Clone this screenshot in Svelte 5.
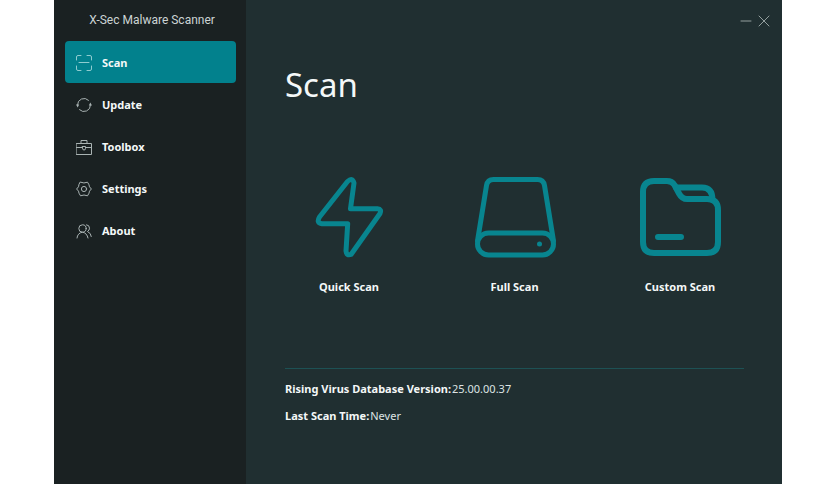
<script>
  let active = 'Scan';

  const pages = ['Scan', 'Update', 'Toolbox', 'Settings', 'About'];
  const scans = ['Quick Scan', 'Full Scan', 'Custom Scan'];

  const info = [
    { label: 'Rising Virus Database Version:', value: '25.00.00.37' },
    { label: 'Last Scan Time:', value: 'Never' }
  ];
</script>

<div class="window">
  <aside>
    <div class="brand">X-Sec Malware Scanner</div>
    <nav aria-label="Main">
      {#each pages as page}
        <button class="nav-item" class:active={active === page} on:click={() => (active = page)}>
          <svg viewBox="0 0 16 16" aria-hidden="true">
            {#if page === 'Scan'}
              <path d="M.5 5V2Q.5 .5 2 .5H5M11 .5h3Q15.500 .5 15.500 2V5M15.500 11v3Q15.500 15.500 14 15.500H11M5 15.500H2Q.5 15.500 .5 14V11M3 7.500h10" />
            {:else if page === 'Update'}
              <path d="M1.500 8A6.500 6.500 0 0 1 12.500 3.300M14.500 8A6.500 6.500 0 0 1 3.500 12.700" />
              <path class="solid" d="M0 7.500h3.200L1.700 10.500zM12.800 8.500H16L14.300 5.500z" />
            {:else if page === 'Toolbox'}
              <path d="M.5 4.500h15v11H.5zM5 4.500V1.500h6v3M.5 8.500h6M9.500 8.500h6M6.500 7.500h3v2a1.500 1.500 0 0 1-3 0z" />
            {:else if page === 'Settings'}
              <path d="M4.500 1.200Q8 2.800 11.500 1.200L13 3.800Q12.800 5.800 15.400 8Q12.800 10.200 13 12.200L11.500 14.800Q8 13.200 4.500 14.800L3 12.200Q3.200 10.200 .6 8Q3.200 5.800 3 3.800z" />
              <circle cx="8" cy="8" r="2.600" />
            {:else}
              <circle cx="6.500" cy="5.500" r="3.700" />
              <path d="M1 15q.5-5 5.500-5.800Q11 10 12 15M10.500 1.800q3 .2 3 3.400 0 2-2 3.300Q15 10 15.300 13.500" />
            {/if}
          </svg>
          <span>{page}</span>
        </button>
      {/each}
    </nav>
  </aside>

  <main>
    <div class="window-controls">
      <button aria-label="Minimize">
        <svg viewBox="0 0 12 12"><path d="M1 6h10" /></svg>
      </button>
      <button aria-label="Close">
        <svg viewBox="0 0 12 12"><path d="M1 1l10 10M11 1L1 11" /></svg>
      </button>
    </div>

    <h1>Scan</h1>

    <div class="scans">
      {#each scans as scan}
        <button class="scan">
          <svg viewBox="0 0 84 84" aria-hidden="true">
            {#if scan === 'Quick Scan'}
              <path d="M40.500 6.500L12.500 42Q9 48 15 48.700H40.700L39 76Q39.500 81 44 79.500L73 38.500Q75 34 70.500 33.700H43.500L47 8Q45.500 2 40.500 6.500z" />
            {:else if scan === 'Full Scan'}
              <path d="M4.500 66L13.500 10.500Q14.500 4.500 20.500 4.500H64.500Q70.500 4.500 71.500 10.500L80.500 66" />
              <rect x="4.500" y="58" width="76" height="22" rx="11" />
              <circle class="dot" cx="66.500" cy="69" r="2.500" />
            {:else}
              <path class="thick" d="M5 17Q5 6 16 6H29Q34 6 36.500 10L41 18.500Q44 24 49 24H69Q80 24 80 35V67Q80 78 69 78H16Q5 78 5 67z" />
              <path class="thick" d="M38 12.500H64Q74.500 12.500 74.500 25M20 62H43" />
            {/if}
          </svg>
          <span>{scan}</span>
        </button>
      {/each}
    </div>

    <dl>
      {#each info as row}
        <div class="row">
          <dt>{row.label}</dt>
          <dd>{row.value}</dd>
        </div>
      {/each}
    </dl>
  </main>
</div>

<style>
  :global(body) {
    margin: 0;
    background: #fff;
  }

  .window {
    display: flex;
    min-height: 100vh;
    margin: 0 54px;
    background: #202f31;
    color: #f4f8f8;
    font-family: 'Segoe UI', 'Noto Sans', sans-serif;
    font-size: 11px;
  }

  button {
    padding: 0;
    border: 0;
    background: none;
    color: inherit;
    font: inherit;
    cursor: pointer;
  }

  svg {
    display: block;
    fill: none;
    stroke: currentColor;
    stroke-linecap: round;
    stroke-linejoin: round;
  }

  /* Sidebar */
  aside {
    flex: none;
    width: 192px;
    background: #1a2122;
  }

  .brand {
    padding-top: 12px;
    padding-left: 4px;
    height: 29px;
    color: #ccd4d4;
    font-family: Roboto, sans-serif;
    font-size: 12px;
    line-height: 16px;
    text-align: center;
  }

  nav {
    display: flex;
    flex-direction: column;
    padding: 0 10px 0 11px;
  }

  .nav-item {
    display: flex;
    align-items: center;
    gap: 10px;
    height: 42px;
    padding: 2px 11px 0;
    border-radius: 4px;
    font-weight: 700;
    line-height: 16px;
  }

  .nav-item.active {
    background: #02818d;
  }

  .nav-item svg {
    width: 16px;
    height: 16px;
    color: #a9b3b3;
  }

  .nav-item.active svg {
    color: #8fccd0;
  }

  .solid {
    fill: currentColor;
    stroke: none;
  }

  /* Content */
  main {
    flex: 1;
    padding: 0 38px 0 39px;
  }

  .window-controls {
    display: flex;
    justify-content: flex-end;
    gap: 6px;
    padding-top: 15px;
    margin-right: -26px;
    color: #94a09f;
  }

  .window-controls svg {
    width: 12px;
    height: 12px;
  }

  h1 {
    margin: 32px 0 0;
    font-size: 33px;
    font-weight: 400;
    line-height: 52px;
  }

  .scans {
    display: flex;
    justify-content: space-between;
    margin-top: 64px;
  }

  .scan {
    display: flex;
    flex-direction: column;
    align-items: center;
    gap: 20px;
    width: 128px;
    font-weight: 700;
    line-height: 16px;
  }

  .scan svg {
    width: 84px;
    height: 84px;
    color: #08858f;
    stroke-width: 5;
  }

  .thick {
    stroke-width: 6;
  }

  .dot {
    fill: currentColor;
    stroke: none;
  }

  dl {
    margin: 73px 0 0;
    padding-top: 12px;
    border-top: 1px solid #1d5154;
  }

  .row {
    display: flex;
    gap: 1px;
    margin-bottom: 11px;
    line-height: 16px;
  }

  dt {
    font-weight: 700;
  }

  dd {
    margin: 0;
    color: #dde4e4;
  }
</style>
